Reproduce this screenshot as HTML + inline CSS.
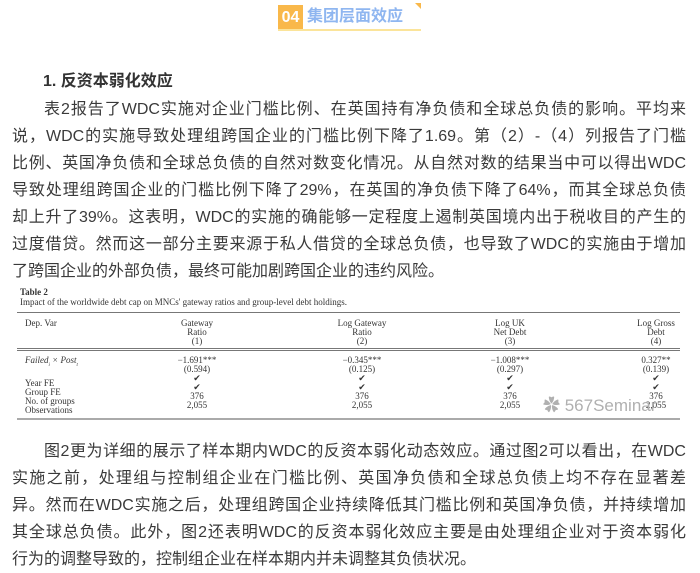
<!DOCTYPE html>
<html><head><meta charset="utf-8"><style>
body{margin:0;width:700px;height:571px;background:#fff;position:relative;overflow:hidden;font-family:"Liberation Sans","Noto Sans CJK SC",sans-serif;color:#333}
.a{position:absolute;white-space:nowrap}
.ln{position:absolute;left:12px;width:674px;font-size:16px;height:27px;line-height:27px;text-align:justify;text-align-last:justify;white-space:nowrap;color:#3a3a3a}
.t{position:absolute;font-family:"Liberation Serif",serif;font-size:9px;color:#333;white-space:nowrap;line-height:9px}
.c{transform:translateX(-50%);text-align:center}
.rule{position:absolute;left:17px;width:663px;background:#777}
</style></head><body>
<div class="a" style="left:278px;top:5px;width:25px;height:25px;background:#f9b84a;color:#fff;font-weight:bold;font-size:16px;line-height:25px;text-align:center">04</div>
<div class="a" style="left:307px;top:4px;font-size:16px;font-weight:bold;color:#8fb6f0;line-height:26px">集团层面效应</div>
<div class="a" style="left:278px;top:29px;width:143px;height:2px;background:#fbe49a"></div>
<div class="a" style="left:415px;top:3px;width:0;height:0;border-left:6px solid transparent;border-top:6px solid #f9b84a"></div>

<div class="a" style="left:43px;top:69px;font-size:16px;font-weight:bold;color:#333;line-height:26px">1. 反资本弱化效应</div>
<div class="ln" style="top:96px;left:44px;width:642px">表2报告了WDC实施对企业门槛比例、在英国持有净负债和全球总负债的影响。平均来</div>
<div class="ln" style="top:123px">说，WDC的实施导致处理组跨国企业的门槛比例下降了1.69。第（2）-（4）列报告了门槛</div>
<div class="ln" style="top:150px">比例、英国净负债和全球总负债的自然对数变化情况。从自然对数的结果当中可以得出WDC</div>
<div class="ln" style="top:177px">导致处理组跨国企业的门槛比例下降了29%，在英国的净负债下降了64%，而其全球总负债</div>
<div class="ln" style="top:204px">却上升了39%。这表明，WDC的实施的确能够一定程度上遏制英国境内出于税收目的产生的</div>
<div class="ln" style="top:231px">过度借贷。然而这一部分主要来源于私人借贷的全球总负债，也导致了WDC的实施由于增加</div>
<div class="ln" style="top:258px;text-align-last:left;width:auto">了跨国企业的外部负债，最终可能加剧跨国企业的违约风险。</div>

<div class="t" style="left:20px;top:288px;font-weight:bold">Table 2</div>
<div class="t" style="left:20px;top:298px">Impact of the worldwide debt cap on MNCs' gateway ratios and group-level debt holdings.</div>
<div class="rule" style="top:312px;height:1px"></div>
<div class="t" style="left:25px;top:319px">Dep. Var</div>
<div class="t c" style="left:197px;top:319px">Gateway<br>Ratio<br>(1)</div>
<div class="t c" style="left:362px;top:319px">Log Gateway<br>Ratio<br>(2)</div>
<div class="t c" style="left:510px;top:319px">Log UK<br>Net Debt<br>(3)</div>
<div class="t c" style="left:656px;top:319px">Log Gross<br>Debt<br>(4)</div>
<div class="rule" style="top:348px;height:1px"></div>
<div class="rule" style="top:350px;height:1px"></div>
<div class="t" style="left:25px;top:356px;line-height:9px"><i>Failed<sub style="font-size:5px">i</sub> × Post<sub style="font-size:5px">t</sub></i><br><br>Year FE<br>Group FE<br>No. of groups<br>Observations</div>
<div class="t c" style="left:197px;top:356px">−1.691***<br>(0.594)<br>✔<br>✔<br>376<br>2,055</div>
<div class="t c" style="left:362px;top:356px">−0.345***<br>(0.125)<br>✔<br>✔<br>376<br>2,055</div>
<div class="t c" style="left:510px;top:356px">−1.008***<br>(0.297)<br>✔<br>✔<br>376<br>2,055</div>
<div class="t c" style="left:656px;top:356px">0.327**<br>(0.139)<br>✔<br>✔<br>376<br>2,055</div>
<div class="rule" style="top:418px;height:2px;background:#aaa"></div>
<div class="a" style="left:543px;top:391px;font-size:17px;color:#b0b0b0">✿ 567Seminar</div>

<div class="ln" style="top:438px;left:44px;width:642px">图2更为详细的展示了样本期内WDC的反资本弱化动态效应。通过图2可以看出，在WDC</div>
<div class="ln" style="top:465px">实施之前，处理组与控制组企业在门槛比例、英国净负债和全球总负债上均不存在显著差</div>
<div class="ln" style="top:492px">异。然而在WDC实施之后，处理组跨国企业持续降低其门槛比例和英国净负债，并持续增加</div>
<div class="ln" style="top:519px">其全球总负债。此外，图2还表明WDC的反资本弱化效应主要是由处理组企业对于资本弱化</div>
<div class="ln" style="top:546px;text-align-last:left;width:auto">行为的调整导致的，控制组企业在样本期内并未调整其负债状况。</div>
</body></html>
